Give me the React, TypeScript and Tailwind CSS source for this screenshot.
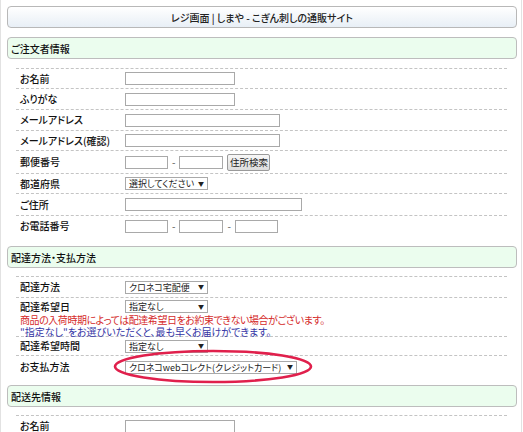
import React from "react"

const font = "font-['Noto_Sans_CJK_JP','Noto_Sans_CJK_SC',sans-serif] [font-feature-settings:'palt']"

const Input = ({ w }: { w: string }) => (
    <div className={`${w} h-[13px] border border-[#a9a9a9] bg-white`} />
)

const Select = ({ w, text }: { w: string; text: string }) => (
    <div className={`${w} h-[13px] border border-[#a9a9a9] bg-white flex items-center justify-between pl-[3px] pr-[3px] text-[9px] leading-none text-[#222] whitespace-nowrap overflow-hidden`}>
        <span>{text}</span>
        <span className="text-[6px] ml-[2px]">▼</span>
    </div>
)

const Row = ({ label, h, children }: { label: string; h: string; children?: React.ReactNode }) => (
    <div className={`grid grid-cols-[109px_1fr] items-center ${h} border-t border-dashed border-[#c4c4c4]`}>
        <div className="pl-[4px] text-[10px] leading-none font-medium text-[#111]">{label}</div>
        <div className="flex items-center">{children}</div>
    </div>
)

const SectionHeader = ({ title, mt }: { title: string; mt: string }) => (
    <div className={`${mt} h-[22px] rounded-[4px] border border-[#bdbdbd] bg-[#ebfdee] flex items-center pl-[3px] text-[10px] font-medium text-[#111]`}>
        {title}
    </div>
)

const Dash = () => <span className="mx-[4px] text-[10px] leading-none text-[#555]">-</span>

export default function App() {
    return (
        <div className={`w-[523px] h-[432px] overflow-hidden bg-white ${font}`}>
            <div className="w-[522px] h-[432px] border-l border-[#e2e2e2] border-r border-[#a8a8a8] pl-[6px] pr-[4px] pt-[6px]">
                <div className="h-[22px] rounded-[4px] border border-[#b8b8b8] bg-gradient-to-b from-white to-[#e8eff6] flex items-center justify-center text-[10px] font-medium text-[#222]">
                    レジ画面 | しまや - こぎん刺しの通販サイト
                </div>

                <SectionHeader title="ご注文者情報" mt="mt-[9px]" />
                <div className="ml-[9px] w-[491px] mt-[9px]">
                    <Row label="お名前" h="h-[20px]"><Input w="w-[110px]" /></Row>
                    <Row label="ふりがな" h="h-[21px]"><Input w="w-[110px]" /></Row>
                    <Row label="メールアドレス" h="h-[21px]"><Input w="w-[155px]" /></Row>
                    <Row label="メールアドレス(確認)" h="h-[20px]"><Input w="w-[155px]" /></Row>
                    <Row label="郵便番号" h="h-[23px]">
                        <Input w="w-[43px]" />
                        <Dash />
                        <Input w="w-[44px]" />
                        <div className="ml-[4px] h-[17px] w-[43px] rounded-[2px] border border-[#9a9a9a] bg-gradient-to-b from-[#f7f7f7] to-[#dedede] flex items-center justify-center text-[9.5px] text-[#222]">
                            住所検索
                        </div>
                    </Row>
                    <Row label="都道府県" h="h-[20px]"><Select w="w-[83px]" text="選択してください" /></Row>
                    <Row label="ご住所" h="h-[22px]"><Input w="w-[177px]" /></Row>
                    <Row label="お電話番号" h="h-[21px]">
                        <Input w="w-[43px]" />
                        <Dash />
                        <Input w="w-[44px]" />
                        <Dash />
                        <Input w="w-[43px]" />
                    </Row>
                </div>

                <SectionHeader title="配達方法・支払方法" mt="mt-[10px]" />
                <div className="ml-[9px] w-[491px] mt-[8px]">
                    <Row label="配達方法" h="h-[21px]"><Select w="w-[83px]" text="クロネコ宅配便" /></Row>
                    <div className="border-t border-dashed border-[#c4c4c4] h-[39px]">
                        <div className="grid grid-cols-[109px_1fr] items-center h-[13px] mt-[2px]">
                            <div className="pl-[4px] text-[10px] leading-none font-medium text-[#111]">配達希望日</div>
                            <div className="flex items-center"><Select w="w-[83px]" text="指定なし" /></div>
                        </div>
                        <div className="pl-[4px] mt-[2px] text-[10px] leading-[10px] tracking-[-0.45px] text-[#d52b2b] whitespace-nowrap">商品の入荷時期によっては配達希望日をお約束できない場合がございます。</div>
                        <div className="pl-[4px] mt-[2px] text-[10px] leading-[10px] text-[#3535a5] whitespace-nowrap">"指定なし"をお選びいただくと、最も早くお届けができます。</div>
                    </div>
                    <Row label="配達希望時間" h="h-[19px]"><Select w="w-[83px]" text="指定なし" /></Row>
                    <div className="relative">
                        <Row label="お支払方法" h="h-[23px]"><Select w="w-[172px]" text="クロネコwebコレクト(クレジットカード)" /></Row>
                        <svg className="absolute left-[97px] top-[-6px]" width="202" height="35" viewBox="0 0 202 35">
                            <ellipse cx="100" cy="17.5" rx="98" ry="15.5" fill="none" stroke="#e0204c" strokeWidth="2.6" />
                        </svg>
                    </div>
                </div>

                <SectionHeader title="配送先情報" mt="mt-[7px]" />
                <div className="ml-[9px] w-[491px] mt-[8px]">
                    <Row label="お名前" h="h-[21px]"><Input w="w-[110px]" /></Row>
                </div>
            </div>
        </div>
    )
}
